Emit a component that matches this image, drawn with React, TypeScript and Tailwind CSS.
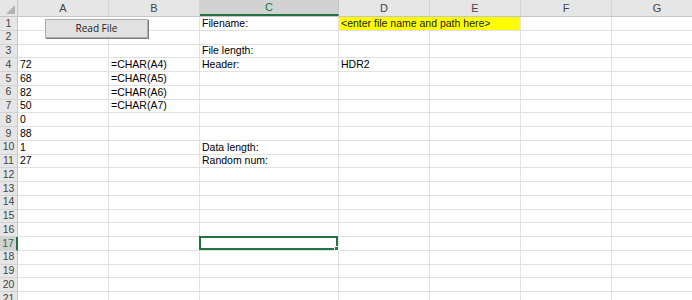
import React from 'react';

const cols = [
  { key: 'A', w: 'w-[91px]' },
  { key: 'B', w: 'w-[91px]' },
  { key: 'C', w: 'w-[139px]' },
  { key: 'D', w: 'w-[91px]' },
  { key: 'E', w: 'w-[91px]' },
  { key: 'F', w: 'w-[91px]' },
  { key: 'G', w: 'w-[91px]' },
];

const data: Record<number, Record<string, string>> = {
  1: { C: 'Filename:' },
  3: { C: 'File length:' },
  4: { A: '72', B: '=CHAR(A4)', C: 'Header:', D: 'HDR2' },
  5: { A: '68', B: '=CHAR(A5)' },
  6: { A: '82', B: '=CHAR(A6)' },
  7: { A: '50', B: '=CHAR(A7)' },
  8: { A: '0' },
  9: { A: '88' },
  10: { A: '1', C: 'Data length:' },
  11: { A: '27', C: 'Random num:' },
};

const rows = Array.from({ length: 21 }, (_, i) => i + 1);

export default function App() {
  return (
    <div className="relative w-[692px] h-[300px] overflow-hidden bg-white font-['Liberation_Sans',sans-serif] text-[10.5px] text-black">
      {/* Column headers */}
      <div className="flex h-[17px] bg-[#e6e6e6] border-b border-[#c6c6c6]">
        <div className="relative w-[18px] shrink-0 border-r border-[#c6c6c6]">
          <div className="absolute right-[2px] bottom-[2px] w-0 h-0 border-l-[9px] border-l-transparent border-b-[9px] border-b-[#b4b4b4]" />
        </div>
        {cols.map((c) =>
          c.key === 'C' ? (
            <div
              key={c.key}
              className={`${c.w} shrink-0 flex items-center justify-center bg-[#d2d2d2] text-[#217346] border-r border-[#c6c6c6] border-b-2 border-b-[#217346] text-[11px]`}
            >
              {c.key}
            </div>
          ) : (
            <div
              key={c.key}
              className={`${c.w} shrink-0 flex items-center justify-center text-[#444] border-r border-[#d4d4d4] text-[11px]`}
            >
              {c.key}
            </div>
          )
        )}
      </div>

      {/* Rows */}
      {rows.map((r) => {
        const selected = r === 17;
        return (
          <div key={r} className="flex h-[13.75px]">
            <div
              className={`w-[18px] shrink-0 flex items-center justify-center text-[10.5px] border-b border-[#d4d4d4] ${
                selected
                  ? 'bg-[#d2d2d2] text-[#217346] border-r-2 border-r-[#217346]'
                  : 'bg-[#e6e6e6] text-[#444] border-r border-r-[#c6c6c6]'
              }`}
            >
              {r}
            </div>
            {r === 1 ? (
              <>
                <Cell w="w-[91px]" />
                <Cell w="w-[91px]" />
                <Cell w="w-[139px]" text="Filename:" />
                <div className="w-[182px] shrink-0 bg-[#ffff00] border-r border-b border-[#e1e1e1] flex items-end pl-[2px] leading-[13px] whitespace-nowrap text-[#202020]">
                  &lt;enter file name and path here&gt;
                </div>
                <Cell w="w-[91px]" />
                <Cell w="w-[91px]" />
              </>
            ) : (
              cols.map((c) => (
                <Cell key={c.key} w={c.w} text={data[r]?.[c.key]} selected={selected && c.key === 'C'} />
              ))
            )}
          </div>
        );
      })}

      {/* Read File button (form control over the sheet) */}
      <button className="absolute left-[45px] top-[19px] w-[103px] h-[19px] bg-[#e1e1e1] border border-[#adadad] shadow-[1px_1px_0_0_#7a7a7a] font-['Open_Sans',sans-serif] text-[10px] text-[#222] flex items-center justify-center">
        Read File
      </button>
    </div>
  );
}

function Cell({ w, text, selected }: { w: string; text?: string; selected?: boolean }) {
  return (
    <div
      className={`${w} shrink-0 relative border-r border-b border-[#e1e1e1] flex items-end pl-[2px] leading-[13px] whitespace-nowrap`}
    >
      {text}
      {selected && (
        <div className="absolute -left-[1px] -top-[1px] -right-[0px] -bottom-[0px] border-2 border-[#217346]">
          <div className="absolute -right-[3px] -bottom-[3px] w-[5px] h-[5px] bg-[#217346] border border-white" />
        </div>
      )}
    </div>
  );
}
